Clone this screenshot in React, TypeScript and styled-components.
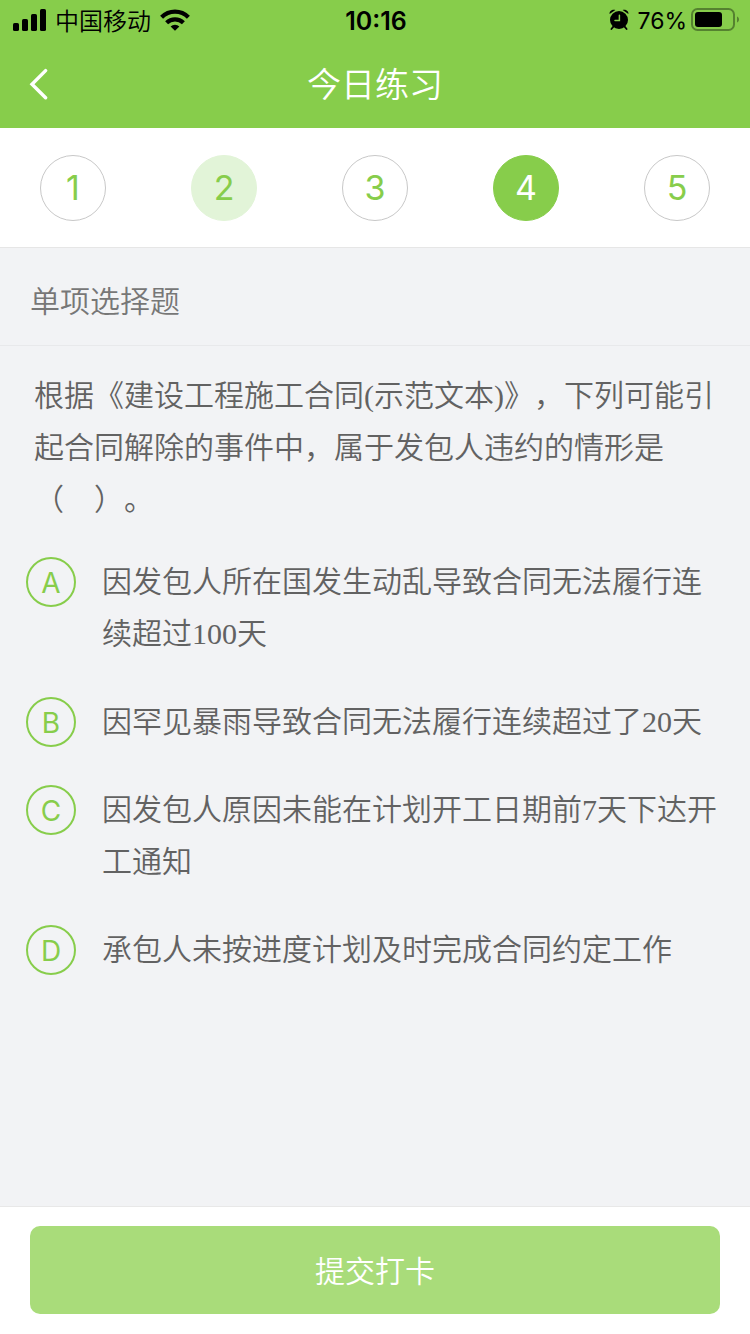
import React, { useState } from "react";
import styled, { createGlobalStyle } from "styled-components";

const GREEN = "#87cd4b";
const UI_FONT = `Inter, "Noto Sans CJK SC", sans-serif`;
const READING_FONT = `"Liberation Serif", "Noto Sans CJK SC", serif`;

const GlobalStyle = createGlobalStyle`
  * { box-sizing: border-box; }
  body { margin: 0; background: #f2f3f5; font-family: ${UI_FONT}; font-weight: 350; text-spacing-trim: space-all; }
  button { font-family: inherit; font-weight: inherit; padding: 0; border: 0; background: none; cursor: pointer; }
  svg { display: block; flex: none; }
`;

const Page = styled.div`
  display: flex;
  flex-direction: column;
  min-height: 100vh;
`;

const Header = styled.header`
  background: ${GREEN};
`;

const StatusBar = styled.div`
  display: grid;
  grid-template-columns: 1fr auto 1fr;
  align-items: center;
  height: 40px;
  padding: 0 11px 0 13px;
  line-height: 36px;
  color: #000;
`;

const StatusGroup = styled.div<{ $end?: boolean }>`
  display: flex;
  align-items: center;
  justify-content: ${(p) => (p.$end ? "flex-end" : "flex-start")};
  gap: ${(p) => (p.$end ? "8px" : "9px")};
`;

const Carrier = styled.span`
  padding-top: 3px;
  font-size: 24px;
`;

const Clock = styled.time`
  padding-top: 1px;
  font-size: 25px;
  font-weight: 600;
`;

const Battery = styled.div`
  display: flex;
  align-items: center;
  gap: 4px;
`;

const Percent = styled.span`
  padding-top: 1px;
  font-size: 23px;
  font-weight: 400;
`;

const NavBar = styled.div`
  display: grid;
  grid-template-columns: 60px 1fr 60px;
  align-items: center;
  height: 88px;
  padding: 0 16px;
`;

const BackButton = styled.button`
  display: flex;
  align-items: center;
  height: 60px;
  padding-left: 12px;
`;

const Title = styled.h1`
  margin: 0;
  padding-top: 1px;
  font-size: 34px;
  font-weight: 350;
  line-height: 48px;
  text-align: center;
  color: #fff;
`;

const Steps = styled.nav`
  display: flex;
  justify-content: space-between;
  padding: 27px 40px 26px;
  background: #fff;
  border-bottom: 1px solid #e6e6e6;
`;

type StepState = "todo" | "done" | "current";

const stepColors: Record<StepState, string> = {
  todo: `background: #fff; border-color: #c8c8c8; color: ${GREEN};`,
  done: `background: #e2f4d8; border-color: #e2f4d8; color: ${GREEN};`,
  current: `background: ${GREEN}; border-color: ${GREEN}; color: #fff;`,
};

const Step = styled.button<{ $state: StepState }>`
  && {
    width: 66px;
    height: 66px;
    border: 1px solid;
    border-radius: 50%;
    font-size: 34px;
    font-weight: 400;
    line-height: 64px;
    ${(p) => stepColors[p.$state]}
  }
`;

const SectionTitle = styled.h2`
  margin: 0;
  padding: 31px 30px 22px;
  border-bottom: 1px solid #e8e9eb;
  font-size: 30px;
  font-weight: 350;
  line-height: 44px;
  color: #777;
`;

const Main = styled.main`
  flex: 1;
`;

const Question = styled.fieldset`
  margin: 0;
  padding: 0 30px 36px 26px;
  border: 0;
  min-width: 0;
  font-family: ${READING_FONT};
  font-size: 30px;
  line-height: 52px;
  color: #626262;
`;

const Prompt = styled.legend`
  padding: 24px 4px 30px 8px;
`;

const Options = styled.div`
  display: flex;
  flex-direction: column;
  gap: 36px;
`;

const Option = styled.label`
  display: flex;
  align-items: flex-start;
  gap: 26px;
  cursor: pointer;
`;

const Radio = styled.input`
  position: absolute;
  opacity: 0;
  width: 50px;
  height: 50px;
  margin: 0;
`;

const Letter = styled.span`
  flex: none;
  width: 50px;
  height: 50px;
  margin-top: 1px;
  border: 2px solid ${GREEN};
  border-radius: 50%;
  font-family: ${UI_FONT};
  font-size: 28px;
  font-weight: 400;
  line-height: 48px;
  text-align: center;
  color: ${GREEN};

  ${Radio}:checked + & {
    background: ${GREEN};
    color: #fff;
  }
`;

const Footer = styled.footer`
  padding: 19px 30px 20px;
  background: #fff;
  border-top: 1px solid #e8e8e8;
`;

const SubmitButton = styled.button`
  && {
    width: 100%;
    height: 88px;
    padding-bottom: 3px;
    border-radius: 10px;
    background: #a9dc7a;
    font-size: 30px;
    color: #fff;
  }
`;

const SignalIcon = () => (
  <svg width="33" height="22" viewBox="0 0 33 22" aria-hidden="true">
    <rect x="0" y="14" width="6" height="8" rx="1.6" />
    <rect x="9" y="10" width="6" height="12" rx="1.6" />
    <rect x="18" y="5" width="6" height="17" rx="1.6" />
    <rect x="27" y="0" width="6" height="22" rx="1.6" />
  </svg>
);

const WifiIcon = () => (
  <svg width="30" height="22" viewBox="0 0 30 22" fill="none" stroke="#000" strokeWidth="4.2" aria-hidden="true">
    <path d="M1.6 8.2a19 19 0 0 1 26.8 0" />
    <path d="M6.6 13.8a12 12 0 0 1 16.8 0" />
    <path d="M15 21.8l-4.4-4.2a6.3 6.3 0 0 1 8.8 0z" fill="#000" stroke="none" />
  </svg>
);

const AlarmIcon = () => (
  <svg width="20" height="22" viewBox="0 0 20 22" fill="none" stroke="#000" strokeLinecap="round" aria-hidden="true">
    <circle cx="10" cy="11" r="9" fill="#000" stroke="none" />
    <path d="M.6 5C.2 2 3.400 0 6.400 1zM19.400 5C19.800 2 16.600 0 13.600 1z" fill="#000" stroke="none" />
    <path d="M4.400 17.600l-2 2.400M15.600 17.600l2 2.400" strokeWidth="1.800" />
    <path d="M10.400 6.200v5.400H6" stroke={GREEN} strokeWidth="1.500" />
  </svg>
);

const BatteryIcon = () => (
  <svg width="48" height="24" viewBox="0 0 48 24" aria-hidden="true">
    <rect x="1" y="1" width="42" height="21" rx="5.500" fill="none" stroke="#558230" strokeWidth="2" />
    <rect x="4" y="4" width="27" height="15" rx="3" />
    <path d="M46 8.500c1.400.6 2 1.700 2 3s-.6 2.400-2 3z" fill="#558230" />
  </svg>
);

const BackIcon = () => (
  <svg width="22" height="32" viewBox="0 0 22 32" fill="none" stroke="#fff" strokeWidth="3.400" strokeLinecap="round" aria-hidden="true">
    <path d="M17.600 2.600L4 16.200l13.600 13.600" />
  </svg>
);

const steps: { n: number; state: StepState }[] = [
  { n: 1, state: "todo" },
  { n: 2, state: "done" },
  { n: 3, state: "todo" },
  { n: 4, state: "current" },
  { n: 5, state: "todo" },
];

const options = [
  { letter: "A", text: "因发包人所在国发生动乱导致合同无法履行连续超过100天" },
  { letter: "B", text: "因罕见暴雨导致合同无法履行连续超过了20天" },
  { letter: "C", text: "因发包人原因未能在计划开工日期前7天下达开工通知" },
  { letter: "D", text: "承包人未按进度计划及时完成合同约定工作" },
];

export default function App() {
  const [answer, setAnswer] = useState("");

  return (
    <Page lang="zh-CN">
      <GlobalStyle />
      <Header>
        <StatusBar>
          <StatusGroup>
            <SignalIcon />
            <Carrier>中国移动</Carrier>
            <WifiIcon />
          </StatusGroup>
          <Clock>10:16</Clock>
          <StatusGroup $end>
            <AlarmIcon />
            <Battery>
              <Percent>76%</Percent>
              <BatteryIcon />
            </Battery>
          </StatusGroup>
        </StatusBar>
        <NavBar>
          <BackButton type="button" aria-label="返回">
            <BackIcon />
          </BackButton>
          <Title>今日练习</Title>
        </NavBar>
      </Header>
      <Steps>
        {steps.map((s) => (
          <Step key={s.n} type="button" $state={s.state} aria-current={s.state === "current" ? "step" : undefined}>
            {s.n}
          </Step>
        ))}
      </Steps>
      <Main>
        <SectionTitle>单项选择题</SectionTitle>
        <Question>
          <Prompt>根据《建设工程施工合同(示范文本)》，下列可能引起合同解除的事件中，属于发包人违约的情形是（　）。</Prompt>
          <Options>
            {options.map((o) => (
              <Option key={o.letter}>
                <Radio
                  type="radio"
                  name="answer"
                  value={o.letter}
                  checked={answer === o.letter}
                  onChange={() => setAnswer(o.letter)}
                />
                <Letter>{o.letter}</Letter>
                <span>{o.text}</span>
              </Option>
            ))}
          </Options>
        </Question>
      </Main>
      <Footer>
        <SubmitButton type="button">提交打卡</SubmitButton>
      </Footer>
    </Page>
  );
}
